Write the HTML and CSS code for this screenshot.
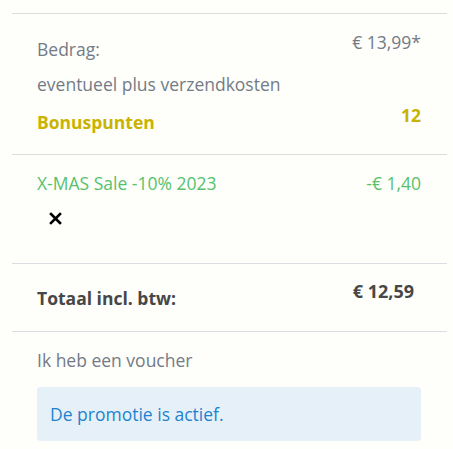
FILE: index.html
```html
<!DOCTYPE html>
<html>
<head>
<meta charset="utf-8">
<link rel="stylesheet" href="styles.css">
</head>
<body>
<div class="summary">
  <section class="block block-amount">
    <div class="row row-first">
      <span class="label">Bedrag:</span>
      <span class="value">€ 13,99*</span>
    </div>
    <div class="row row-ship">
      <span class="label">eventueel plus verzendkosten</span>
    </div>
    <div class="row row-bonus">
      <span class="label bonus">Bonuspunten</span>
      <span class="value bonus">12</span>
    </div>
  </section>
  <section class="block block-promo">
    <div class="row promo">
      <span>X-MAS Sale -10% 2023</span>
      <span>-€ 1,40</span>
    </div>
    <button class="remove" aria-label="verwijderen">
      <svg width="13" height="13" viewBox="0 0 13 13"><path d="M2 2 L11 11 M11 2 L2 11" stroke="#000" stroke-width="2.6" stroke-linecap="square"/></svg>
    </button>
  </section>
  <section class="block block-total">
    <div class="row total">
      <span class="label">Totaal incl. btw:</span>
      <span class="value">€ 12,59</span>
    </div>
  </section>
  <section class="block block-voucher">
    <div class="voucher">Ik heb een voucher</div>
    <div class="alert">De promotie is actief.</div>
  </section>
</div>
</body>
</html>
```
FILE: styles.css
```css
html, body {
  margin: 0;
  padding: 0;
  background: #fefefb;
}
body {
  font-family: "Open Sans", "Liberation Sans", sans-serif;
  font-size: 17.5px;
  line-height: 24px;
  color: #737b86;
}
.summary {
  padding: 13px 6px 0 12px;
}
.block {
  border-top: 1px solid #dcdde3;
  padding: 0 26px 0 25px;
}
.row {
  display: flex;
  justify-content: space-between;
  align-items: flex-start;
}
.block-amount {
  padding-top: 16px;
  padding-bottom: 20px;
}
.row-first .label,
.row-bonus .label {
  padding-top: 7px;
}
.row-ship {
  margin-top: 11px;
}
.row-bonus {
  margin-top: 7px;
}
.bonus {
  color: #c9b300;
  font-weight: 700;
}
.block-promo {
  padding-top: 16px;
  height: 92px;
}
.promo {
  color: #56c26b;
}
.remove {
  display: block;
  margin: 17px 0 0 12px;
  padding: 0;
  border: 0;
  background: none;
  width: 13px;
  height: 13px;
  line-height: 0;
}
.block-total {
  padding-top: 15px;
  padding-bottom: 21px;
  padding-right: 33px;
}
.total {
  color: #474747;
  font-weight: 700;
}
.total .label {
  padding-top: 7px;
}
.total .value {
  font-size: 18px;
}
.block-voucher {
  padding-top: 16px;
}
.voucher {
  color: #737b86;
}
.alert {
  margin-top: 15px;
  background: #e6f0f8;
  color: #1d83d0;
  border-radius: 4px;
  padding: 15px 13px;
  height: 24px;
}
```
